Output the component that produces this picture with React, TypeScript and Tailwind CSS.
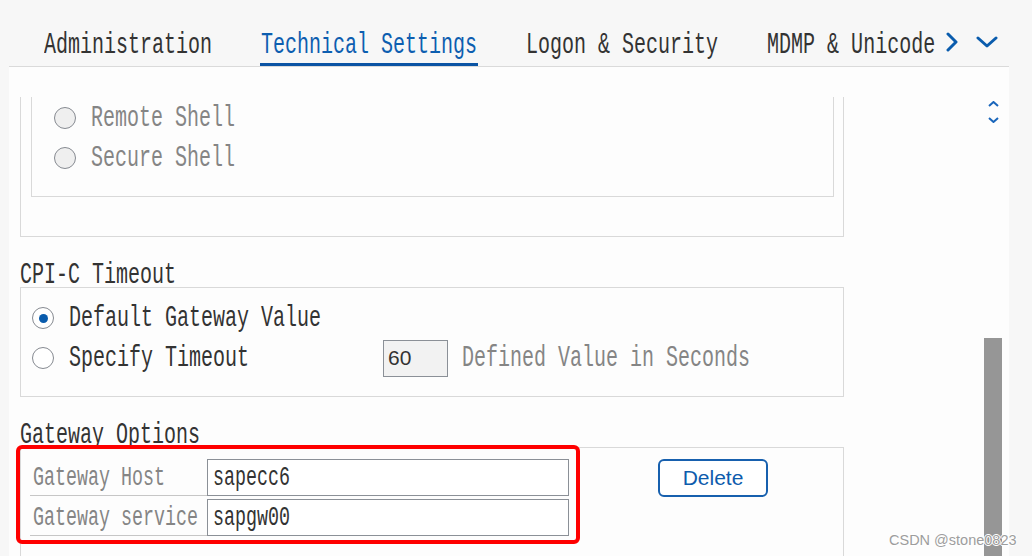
import React from "react";

function T({ children, className = "" }: { children: React.ReactNode; className?: string }) {
  return (
    <span
      className={
        "inline-block whitespace-pre scale-y-150 leading-[28px] font-['Liberation_Mono',monospace] " +
        className
      }
    >
      {children}
    </span>
  );
}

function Radio({ checked = false, disabled = false }: { checked?: boolean; disabled?: boolean }) {
  return (
    <span
      className={
        "flex h-[22px] w-[22px] shrink-0 items-center justify-center rounded-full border-[1.5px] border-[#868a91] " +
        (disabled ? "bg-[#efefef]" : "bg-white")
      }
    >
      {checked && <span className="h-[9px] w-[9px] rounded-full bg-[#0a5cad]" />}
    </span>
  );
}

function Tab({ label, active = false }: { label: string; active?: boolean }) {
  return (
    <div
      className={
        "px-[1px] pb-[4px] pt-[1px] border-b-[3px] " +
        (active ? "border-[#0b54a4] text-[#0d5eb0]" : "border-transparent text-[#333333]")
      }
    >
      <T className="text-[20px]">{label}</T>
    </div>
  );
}

export default function App() {
  return (
    <div className="relative h-[556px] w-[1032px] overflow-hidden bg-[#f7f7f7]">
      <div className="ml-[9px] flex h-full w-[1000px] flex-col">
        {/* Tab bar */}
        <div className="flex h-[67px] shrink-0 items-end gap-[47px] border-b border-[#dadada] pl-[34px]">
          <Tab label="Administration" />
          <Tab label="Technical Settings" active />
          <Tab label="Logon & Security" />
          <div className="flex items-end">
            <Tab label="MDMP & Unicode" />
            <div className="mb-[10px] ml-[10px] flex h-[28px] items-center gap-[18px]">
              <svg width="12" height="20" viewBox="0 0 12 20" fill="none">
                <polyline points="2,2 10,10 2,18" stroke="#0a5cad" strokeWidth="3" strokeLinecap="round" strokeLinejoin="round" />
              </svg>
              <svg width="22" height="12" viewBox="0 0 22 12" fill="none">
                <polyline points="2,2 11,10 20,2" stroke="#0a5cad" strokeWidth="3" strokeLinecap="round" strokeLinejoin="round" />
              </svg>
            </div>
          </div>
        </div>

        {/* Content */}
        <div className="flex min-h-0 flex-1 bg-[#fdfdfd]">
          <div className="flex min-h-0 w-[975px] flex-col pt-[30px]">
            <div className="min-h-0 flex-1 overflow-hidden pl-[11px]">
              {/* Connection type box (scrolled) */}
              <div className="w-[824px] border border-t-0 border-[#d9d9d9] pb-[39px] pl-[10px]">
                <div className="w-[803px] border border-t-0 border-[#d9d9d9] pb-[18px] pl-[22px] pt-[1px]">
                  <div className="flex h-[40px] items-center gap-[15px]">
                    <Radio disabled />
                    <T className="text-[20px] text-[#858585]">Remote Shell</T>
                  </div>
                  <div className="flex h-[40px] items-center gap-[15px]">
                    <Radio disabled />
                    <T className="text-[20px] text-[#858585]">Secure Shell</T>
                  </div>
                </div>
              </div>

              {/* CPI-C Timeout */}
              <div className="mt-[23px] flex h-[27px] items-center pt-[3px] text-[#333333]">
                <T className="text-[20px]">CPI-C Timeout</T>
              </div>
              <div className="w-[824px] border border-[#d9d9d9] pb-[18px] pl-[11px] pt-[10px]">
                <div className="flex h-[40px] items-center gap-[15px]">
                  <Radio checked />
                  <T className="text-[20px] text-[#333333]">Default Gateway Value</T>
                </div>
                <div className="flex h-[40px] items-center">
                  <Radio />
                  <div className="ml-[15px] w-[314px]">
                    <T className="text-[20px] text-[#333333]">Specify Timeout</T>
                  </div>
                  <div className="flex h-[37px] w-[65px] items-center border border-[#8b9097] bg-[#f2f2f2] pl-[4px] text-[21px] text-[#333333] font-['Liberation_Sans',Arial,sans-serif]">
                    60
                  </div>
                  <div className="ml-[14px]">
                    <T className="text-[20px] text-[#858585]">Defined Value in Seconds</T>
                  </div>
                </div>
              </div>

              {/* Gateway Options */}
              <div className="mt-[22px] flex h-[28px] items-center pt-[3px] text-[#333333]">
                <T className="text-[20px]">Gateway Options</T>
              </div>
              <div className="flex h-[200px] w-[824px] items-start border border-[#d9d9d9] pl-[9px] pt-[11px]">
                <div className="grid grid-cols-[177px_362px] gap-y-[3px]">
                  <div className="flex h-[37px] items-center border-b border-[#c6c6c6] pl-[3px] pt-[3px]">
                    <T className="text-[18.33px] text-[#858585]">Gateway Host</T>
                  </div>
                  <div className="flex h-[37px] items-center border border-[#8b9097] bg-white pl-[5px] pt-[3px] text-[#333333]">
                    <T className="text-[18.33px]">sapecc6</T>
                  </div>
                  <div className="flex h-[37px] items-center border-b border-[#c6c6c6] pl-[3px] pt-[3px]">
                    <T className="text-[18.33px] text-[#858585]">Gateway service</T>
                  </div>
                  <div className="flex h-[37px] items-center border border-[#8b9097] bg-white pl-[5px] pt-[3px] text-[#333333]">
                    <T className="text-[18.33px]">sapgw00</T>
                  </div>
                </div>
                <button className="ml-[89px] flex h-[38px] w-[110px] items-center justify-center rounded-[6px] border-2 border-[#1760ae] bg-white text-[21px] text-[#0d5cad] font-['Liberation_Sans',Arial,sans-serif]">
                  Delete
                </button>
              </div>
            </div>
          </div>

          {/* Scrollbar */}
          <div className="flex w-[18px] flex-col items-center">
            <div className="mt-[34px] flex flex-col items-center gap-[10px]">
              <svg width="11" height="6" viewBox="0 0 11 6" fill="none">
                <polyline points="1,5 5.5,1 10,5" stroke="#1a66bb" strokeWidth="2" />
              </svg>
              <svg width="11" height="6" viewBox="0 0 11 6" fill="none">
                <polyline points="1,1 5.5,5 10,1" stroke="#1a66bb" strokeWidth="2" />
              </svg>
            </div>
            <div className="mt-auto h-[218px] w-[18px] bg-[#969696]" />
          </div>
        </div>
      </div>

      {/* Red annotation */}
      <div className="pointer-events-none absolute left-[16px] top-[445px] h-[99px] w-[564px] rounded-[6px] border-4 border-[#ff0000]" />

      {/* Watermark */}
      <div className="absolute left-[889px] top-[530px] text-[14.5px] leading-[20px] text-[#9d9d9d] font-['Liberation_Sans',Arial,sans-serif] [text-shadow:1px_0_0_#ffffff,-1px_0_0_#ffffff,0_1px_0_#ffffff,0_-1px_0_#ffffff]">
        CSDN @stone0823
      </div>
    </div>
  );
}
